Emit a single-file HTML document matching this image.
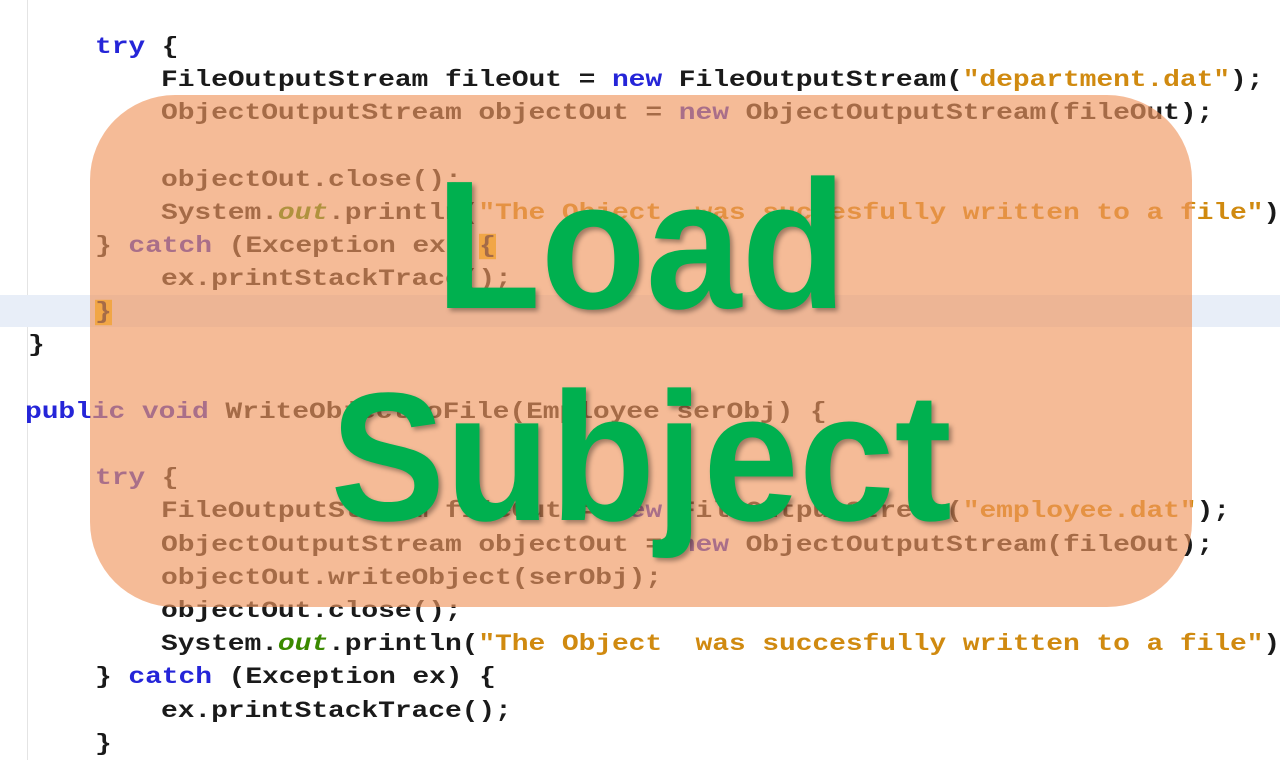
<!DOCTYPE html>
<html><head><meta charset="utf-8"><style>
html,body{margin:0;padding:0;background:#fff;}
body{width:1280px;height:760px;position:relative;overflow:hidden;}
.gut{position:absolute;left:27px;top:0;width:1px;height:760px;background:#e4e4e4;}
.hl{position:absolute;left:0;top:295px;width:1280px;height:32px;background:#e8eef8;}
.l{position:absolute;height:33px;line-height:33px;font-family:"Liberation Mono","Courier New",monospace;font-weight:bold;font-size:28px;letter-spacing:-0.1px;color:#1a1a1a;white-space:pre;transform:scaleY(0.82);transform-origin:50% 50%;}
.k{color:#2525d8}
.s{color:#d08a10}
.o{color:#3a8a00;font-style:italic}
.y{background:#f3c318}
.ov{position:absolute;left:90px;top:95px;width:1102px;height:512px;border-radius:85px;background:rgba(240,150,95,0.65);}
.t{position:absolute;left:0;width:1282px;text-align:center;font-family:"Liberation Sans",Arial,sans-serif;font-weight:bold;font-size:183px;color:#00b04f;line-height:1;text-shadow:3px 3px 5px rgba(0,0,0,0.35);transform:scaleX(0.94);transform-origin:643px 0;}
</style></head><body>
<div class="gut"></div>
<div class="hl"></div>
<div class="l" style="top:31px;left:95px"><span class="k">try</span> {</div>
<div class="l" style="top:64px;left:161px">FileOutputStream fileOut = <span class="k">new</span> FileOutputStream(<span class="s">"department.dat"</span>);</div>
<div class="l" style="top:97px;left:161px">ObjectOutputStream objectOut = <span class="k">new</span> ObjectOutputStream(fileOut);</div>
<div class="l" style="top:164px;left:161px">objectOut.close();</div>
<div class="l" style="top:197px;left:161px">System.<span class="o">out</span>.println(<span class="s">"The Object  was succesfully written to a file"</span>);</div>
<div class="l" style="top:230px;left:95px">} <span class="k">catch</span> (Exception ex) <span class="y">{</span></div>
<div class="l" style="top:263px;left:161px">ex.printStackTrace();</div>
<div class="l" style="top:296px;left:95px"><span class="y">}</span></div>
<div class="l" style="top:329px;left:28px">}</div>
<div class="l" style="top:396px;left:25px"><span class="k">public</span> <span class="k">void</span> WriteObjectToFile(Employee serObj) {</div>
<div class="l" style="top:462px;left:95px"><span class="k">try</span> {</div>
<div class="l" style="top:495px;left:161px">FileOutputStream fileOut = <span class="k">new</span> FileOutputStream(<span class="s">"employee.dat"</span>);</div>
<div class="l" style="top:529px;left:161px">ObjectOutputStream objectOut = <span class="k">new</span> ObjectOutputStream(fileOut);</div>
<div class="l" style="top:562px;left:161px">objectOut.writeObject(serObj);</div>
<div class="l" style="top:595px;left:161px">objectOut.close();</div>
<div class="l" style="top:628px;left:161px">System.<span class="o">out</span>.println(<span class="s">"The Object  was succesfully written to a file"</span>);</div>
<div class="l" style="top:661px;left:95px">} <span class="k">catch</span> (Exception ex) {</div>
<div class="l" style="top:695px;left:161px">ex.printStackTrace();</div>
<div class="l" style="top:728px;left:95px">}</div>
<div class="ov"></div>
<div class="t" style="top:153px">Load</div>
<div class="t" style="top:365px">Subject</div>
</body></html>
